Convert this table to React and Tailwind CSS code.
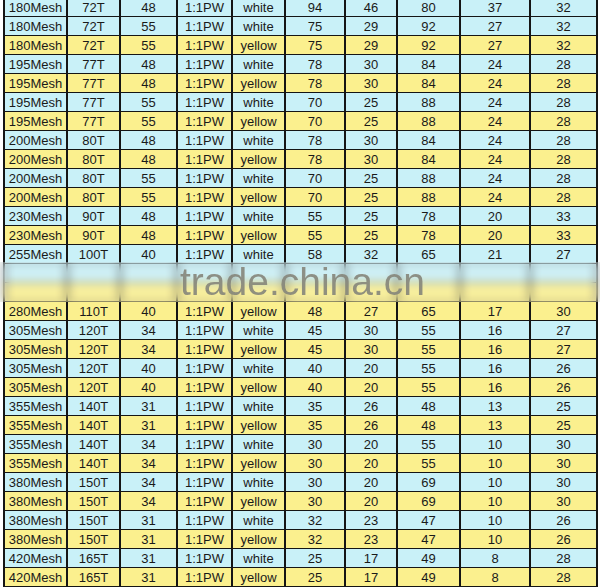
import React from "react";

const rows = [
  ["180Mesh", "72T", "48", "white", "94", "46", "80", "37", "32"],
  ["180Mesh", "72T", "55", "white", "75", "29", "92", "27", "32"],
  ["180Mesh", "72T", "55", "yellow", "75", "29", "92", "27", "32"],
  ["195Mesh", "77T", "48", "white", "78", "30", "84", "24", "28"],
  ["195Mesh", "77T", "48", "yellow", "78", "30", "84", "24", "28"],
  ["195Mesh", "77T", "55", "white", "70", "25", "88", "24", "28"],
  ["195Mesh", "77T", "55", "yellow", "70", "25", "88", "24", "28"],
  ["200Mesh", "80T", "48", "white", "78", "30", "84", "24", "28"],
  ["200Mesh", "80T", "48", "yellow", "78", "30", "84", "24", "28"],
  ["200Mesh", "80T", "55", "white", "70", "25", "88", "24", "28"],
  ["200Mesh", "80T", "55", "yellow", "70", "25", "88", "24", "28"],
  ["230Mesh", "90T", "48", "white", "55", "25", "78", "20", "33"],
  ["230Mesh", "90T", "48", "yellow", "55", "25", "78", "20", "33"],
  ["255Mesh", "100T", "40", "white", "58", "32", "65", "21", "27"],
  [null, null, null, "white"],
  [null, null, null, "yellow"],
  ["280Mesh", "110T", "40", "yellow", "48", "27", "65", "17", "30"],
  ["305Mesh", "120T", "34", "white", "45", "30", "55", "16", "27"],
  ["305Mesh", "120T", "34", "yellow", "45", "30", "55", "16", "27"],
  ["305Mesh", "120T", "40", "white", "40", "20", "55", "16", "26"],
  ["305Mesh", "120T", "40", "yellow", "40", "20", "55", "16", "26"],
  ["355Mesh", "140T", "31", "white", "35", "26", "48", "13", "25"],
  ["355Mesh", "140T", "31", "yellow", "35", "26", "48", "13", "25"],
  ["355Mesh", "140T", "34", "white", "30", "20", "55", "10", "30"],
  ["355Mesh", "140T", "34", "yellow", "30", "20", "55", "10", "30"],
  ["380Mesh", "150T", "34", "white", "30", "20", "69", "10", "30"],
  ["380Mesh", "150T", "34", "yellow", "30", "20", "69", "10", "30"],
  ["380Mesh", "150T", "31", "white", "32", "23", "47", "10", "26"],
  ["380Mesh", "150T", "31", "yellow", "32", "23", "47", "10", "26"],
  ["420Mesh", "165T", "31", "white", "25", "17", "49", "8", "28"],
  ["420Mesh", "165T", "31", "yellow", "25", "17", "49", "8", "28"],
];

function Row({ r }) {
  const yellow = r[3] === "yellow";
  const hidden = r[0] === null;
  const cells = hidden
    ? Array(10).fill("")
    : [r[0], r[1], r[2], "1:1PW", r[3], r[4], r[5], r[6], r[7], r[8]];
  return (
    <div
      className={`grid grid-cols-[63px_53px_57px_55px_53px_60px_52px_63px_70px_67px] h-[19px] border-b border-[#151515] ${
        yellow ? "bg-[#fbf08e]" : "bg-[#c9f1f8]"
      }`}
    >
      {cells.map((c, i) => (
        <div
          key={i}
          className="flex items-center justify-center border-r-2 border-[#151515] text-[13px] leading-none text-[#1a1a1a]"
        >
          {c}
        </div>
      ))}
    </div>
  );
}

export default function App() {
  return (
    <div
      className="relative w-[600px] h-[587px] overflow-hidden bg-white"
      style={{ fontFamily: '"Liberation Sans", Arial, sans-serif' }}
    >
      <div className="ml-[3px] mt-[-2px] w-[595px] border-l-2 border-[#151515]">
        {rows.map((r, i) => (
          <Row key={i} r={r} />
        ))}
      </div>
      <div className="absolute left-0 right-0 top-[262px] h-[40px] backdrop-blur-[5px] bg-white/15" />
      <div className="absolute left-[180px] top-[262px] text-[39px] leading-none text-[#85857a] opacity-90 whitespace-nowrap">
        trade.china.cn
      </div>
    </div>
  );
}
